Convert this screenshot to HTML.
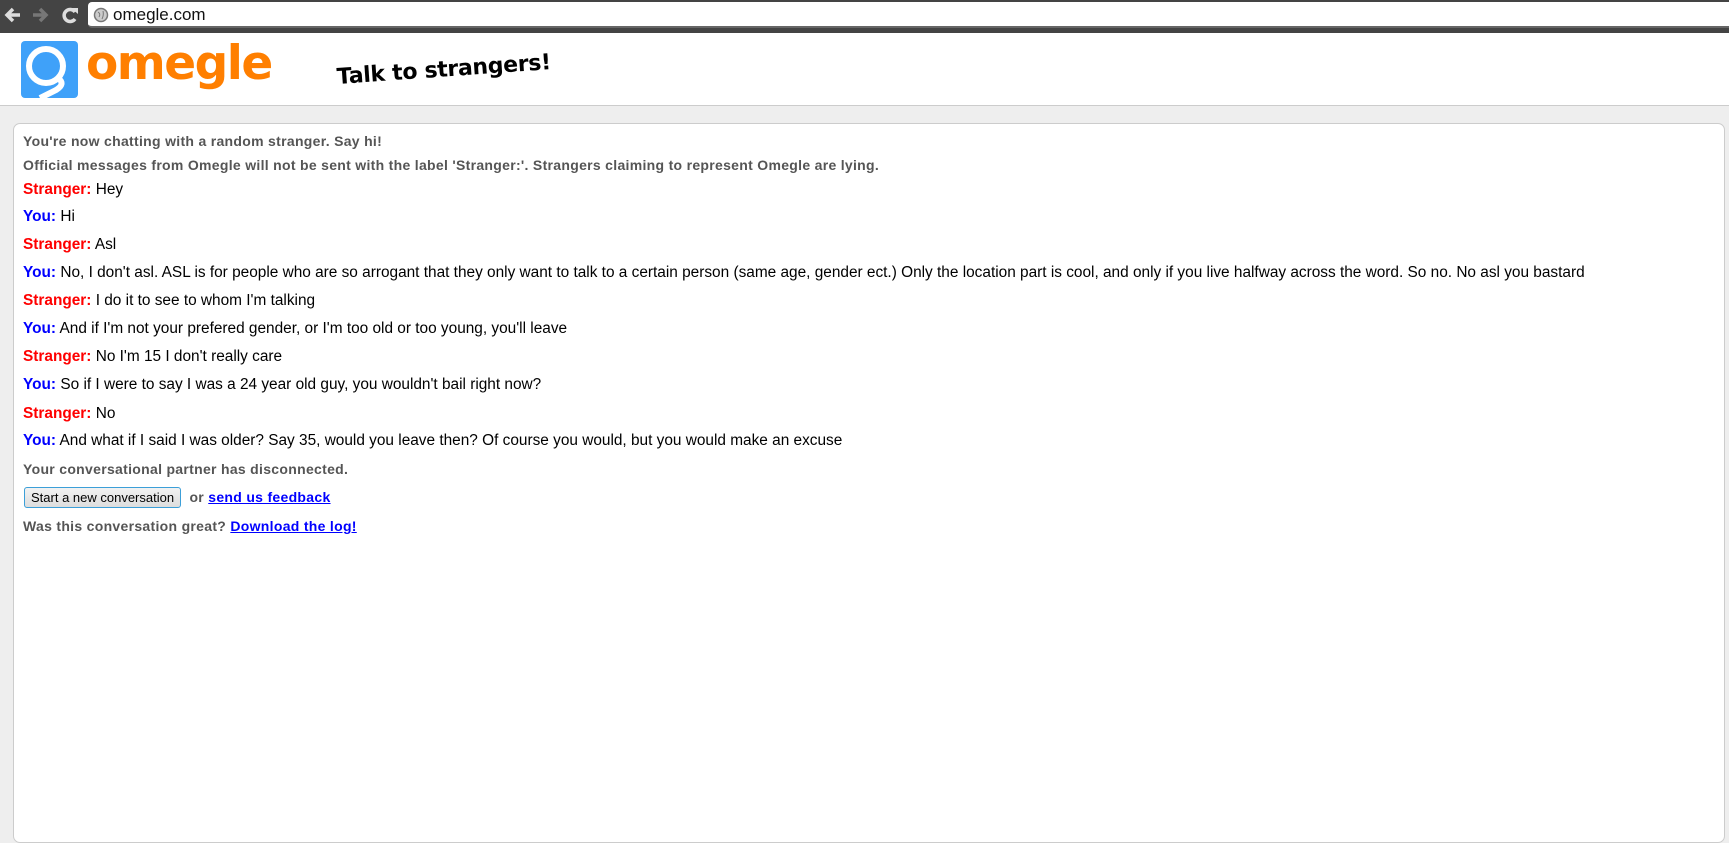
<!DOCTYPE html>
<html><head><meta charset="utf-8"><style>
*{margin:0;padding:0;box-sizing:border-box}
body{width:1729px;height:830px;overflow:hidden;background:#eee;font-family:"Liberation Sans",Arial,sans-serif;position:relative}
#chrome{position:absolute;left:0;top:0;width:1729px;height:33px;background:#444}
#addr{position:absolute;left:88px;top:2px;width:1641px;height:26px;background:#fff;border-radius:4px 0 0 4px;border-bottom:2px solid #666}
#addr span{position:absolute;left:25px;top:3px;font-size:17px;color:#111}
#header{position:absolute;left:0;top:33px;width:1729px;height:73px;background:#fff;border-bottom:1px solid #ccc}
#box{position:absolute;left:13px;top:123px;width:1712px;height:720px;background:#fff;border:1px solid #ccc;border-radius:7px}
.l{position:absolute;left:23px;white-space:nowrap;font-size:15.4px;color:#000}
.s{font-size:14px;font-weight:bold;color:#555;letter-spacing:0.3px}
.st{color:#f00;font-weight:bold}
.y{color:#00f;font-weight:bold}
a{color:#00f;font-weight:bold;text-decoration:underline}
button{font-family:"Liberation Sans",Arial,sans-serif;font-size:13px;letter-spacing:0;padding:0 6px;height:21px;background:linear-gradient(#f2f2f2,#ddd);border:1px solid #3c9fd8;border-radius:3px;color:#000}
</style></head><body>
<div id="chrome">
<svg width="88" height="33" style="position:absolute;left:0;top:0">
<path d="M20 15 H8 M13 9 L7 15 L13 21" stroke="#ddd" stroke-width="3.5" fill="none"/>
<path d="M33 15 H45 M40 9 L46 15 L40 21" stroke="#777" stroke-width="3.5" fill="none"/>
<path d="M75 12 A6 6 0 1 0 75 19" stroke="#ddd" stroke-width="3.5" fill="none"/>
<path d="M71 8 L78 8 L78 14 Z" fill="#ddd"/>
</svg>
<div id="addr"><svg width="16" height="16" style="position:absolute;left:5px;top:5px"><circle cx="8" cy="8" r="6.5" fill="#ccc" stroke="#777" stroke-width="1.5"/><path d="M5 5 Q8 7 6 10 M10 4 Q11 8 9 12" stroke="#777" fill="none"/></svg><span>omegle.com</span></div>
</div>
<div id="header">
<svg width="60" height="60" style="position:absolute;left:20px;top:7px">
<rect x="1" y="1" width="57" height="57" rx="4" fill="#3fa1f9"/>
<circle cx="26" cy="26" r="17" fill="none" stroke="#fff" stroke-width="6"/>
<path d="M38 38 Q46 44 36 50 L20 58" stroke="#fff" stroke-width="6" fill="none"/>
</svg>
<div style="position:absolute;left:86px;top:7px;font-size:47px;line-height:1;font-weight:bold;color:#ff7f00;font-family:'DejaVu Sans','Liberation Sans',sans-serif;letter-spacing:-1.5px">omegle</div>
<div style="position:absolute;left:337px;top:34px;font-size:22px;line-height:1;font-weight:bold;color:#000;transform:rotate(-4deg);transform-origin:left center;font-family:'DejaVu Sans','Liberation Sans',sans-serif;letter-spacing:-0.3px">Talk to strangers!</div>
</div>
<div id="box"></div>
<div class="l s" style="top:133px">You're now chatting with a random stranger. Say hi!</div>
<div class="l s" style="top:157px">Official messages from Omegle will not be sent with the label 'Stranger:'. Strangers claiming to represent Omegle are lying.</div>
<div class="l" style="top:181px"><span class="st">Stranger:</span> Hey</div>
<div class="l" style="top:208px"><span class="y">You:</span> Hi</div>
<div class="l" style="top:236px"><span class="st">Stranger:</span> Asl</div>
<div class="l" style="top:264px"><span class="y">You:</span> No, I don't asl. ASL is for people who are so arrogant that they only want to talk to a certain person (same age, gender ect.) Only the location part is cool, and only if you live halfway across the word. So no. No asl you bastard</div>
<div class="l" style="top:292px"><span class="st">Stranger:</span> I do it to see to whom I'm talking</div>
<div class="l" style="top:320px"><span class="y">You:</span> And if I'm not your prefered gender, or I'm too old or too young, you'll leave</div>
<div class="l" style="top:348px"><span class="st">Stranger:</span> No I'm 15 I don't really care</div>
<div class="l" style="top:376px"><span class="y">You:</span> So if I were to say I was a 24 year old guy, you wouldn't bail right now?</div>
<div class="l" style="top:405px"><span class="st">Stranger:</span> No</div>
<div class="l" style="top:432px"><span class="y">You:</span> And what if I said I was older? Say 35, would you leave then? Of course you would, but you would make an excuse</div>
<div class="l s" style="top:461px">Your conversational partner has disconnected.</div>
<div class="l s" style="top:487px;left:24px"><button>Start a new conversation</button> &nbsp;or <a>send us feedback</a></div>
<div class="l s" style="top:518px">Was this conversation great? <a>Download the log!</a></div>
</body></html>
